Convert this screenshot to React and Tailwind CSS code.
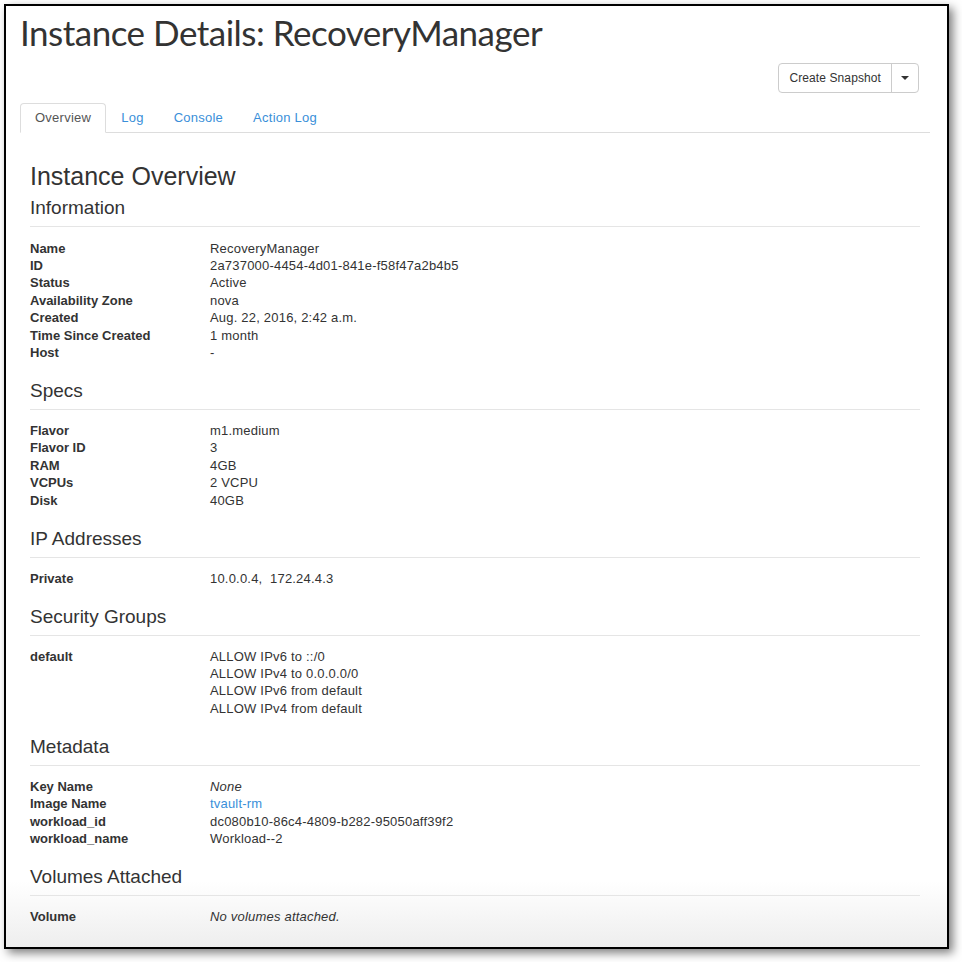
import React from "react";

const SANS = { fontFamily: '"Liberation Sans", Arial, sans-serif' };

const sections = [
  {
    title: "Information",
    rows: [
      ["Name", "RecoveryManager"],
      ["ID", "2a737000-4454-4d01-841e-f58f47a2b4b5"],
      ["Status", "Active"],
      ["Availability Zone", "nova"],
      ["Created", "Aug. 22, 2016, 2:42 a.m."],
      ["Time Since Created", "1 month"],
      ["Host", "-"],
    ],
  },
  {
    title: "Specs",
    rows: [
      ["Flavor", "m1.medium"],
      ["Flavor ID", "3"],
      ["RAM", "4GB"],
      ["VCPUs", "2 VCPU"],
      ["Disk", "40GB"],
    ],
  },
  {
    title: "IP Addresses",
    rows: [["Private", "10.0.0.4,\u00a0 172.24.4.3"]],
  },
  {
    title: "Security Groups",
    rows: [
      [
        "default",
        <>
          <div>ALLOW IPv6 to ::/0</div>
          <div>ALLOW IPv4 to 0.0.0.0/0</div>
          <div>ALLOW IPv6 from default</div>
          <div>ALLOW IPv4 from default</div>
        </>,
      ],
    ],
  },
  {
    title: "Metadata",
    rows: [
      ["Key Name", <em>None</em>],
      ["Image Name", <a className="text-[#3a8fd9]">tvault-rm</a>],
      ["workload_id", "dc080b10-86c4-4809-b282-95050aff39f2"],
      ["workload_name", "Workload--2"],
    ],
  },
  {
    title: "Volumes Attached",
    rows: [["Volume", <em>No volumes attached.</em>]],
  },
];

function Section({ title, rows, first }) {
  return (
    <div>
      {/* section heading with rule */}
      <h4
        className={`${first ? "mt-[8px]" : "mt-[19.9px]"} text-[19px] leading-[20px] pb-[8px] border-b border-[#e5e5e5] text-[#333]`}
      >
        {title}
      </h4>
      {/* label / value rows */}
      <dl
        className={`${first ? "mt-[12.5px]" : "mt-[11.7px]"} grid grid-cols-[180px_1fr] text-[13px] leading-[17.4px] tracking-[0.2px] text-[#333]`}
      >
        {rows.map(([label, value], i) => (
          <React.Fragment key={i}>
            <dt className="font-bold tracking-normal">{label}</dt>
            <dd>{value}</dd>
          </React.Fragment>
        ))}
      </dl>
    </div>
  );
}

export default function App() {
  return (
    <div className="w-[962px] h-[962px] bg-white pt-[4px] pl-[4px]" style={SANS}>
      {/* framed window */}
      <div className="w-[945px] h-[945px] border-2 border-black shadow-[4px_4px_9px_rgba(0,0,0,0.5)] overflow-hidden px-[14px] bg-[linear-gradient(to_bottom,#ffffff_0%,#ffffff_93%,#eeeeee_100%)]">
        <div className="w-[910px]">
          {/* page title */}
          <h1
            className="mt-[6px] text-[35px] leading-[40px] tracking-[-0.5px] text-[#333]"
            style={{ fontFamily: 'Lato, "Open Sans", sans-serif' }}
          >
            Instance Details: RecoveryManager
          </h1>

          {/* actions */}
          <div className="mt-[11px] flex justify-end pr-[11px]">
            <div className="flex h-[30px] border border-[#ccc] rounded-[4px] text-[12px] tracking-[0.1px] text-[#333] bg-white">
              <span className="flex items-center px-[10px]">Create Snapshot</span>
              <span className="flex items-center px-[9px] border-l border-[#ccc]">
                <span className="w-0 h-0 border-t-[4px] border-t-[#333] border-x-[4px] border-x-transparent" />
              </span>
            </div>
          </div>

          {/* tabs */}
          <div className="mt-[10px] flex border-b border-[#ddd] text-[13px] leading-[18px] tracking-[0.25px]">
            <span className="-mb-px px-[14px] py-[5px] border border-[#ddd] border-b-white rounded-t-[4px] bg-white text-[#555]">
              Overview
            </span>
            <span className="-mb-px px-[14px] py-[5px] border border-transparent text-[#3a8fd9]">Log</span>
            <span className="-mb-px px-[14px] py-[5px] border border-transparent text-[#3a8fd9]">Console</span>
            <span className="-mb-px px-[14px] py-[5px] border border-transparent text-[#3a8fd9]">Action Log</span>
          </div>

          {/* overview content */}
          <div className="px-[10px]">
            <h3 className="mt-[29px] text-[25px] leading-[28px] text-[#333]">Instance Overview</h3>
            {sections.map((s, i) => (
              <Section key={s.title} {...s} first={i === 0} />
            ))}
          </div>
        </div>
      </div>
    </div>
  );
}
